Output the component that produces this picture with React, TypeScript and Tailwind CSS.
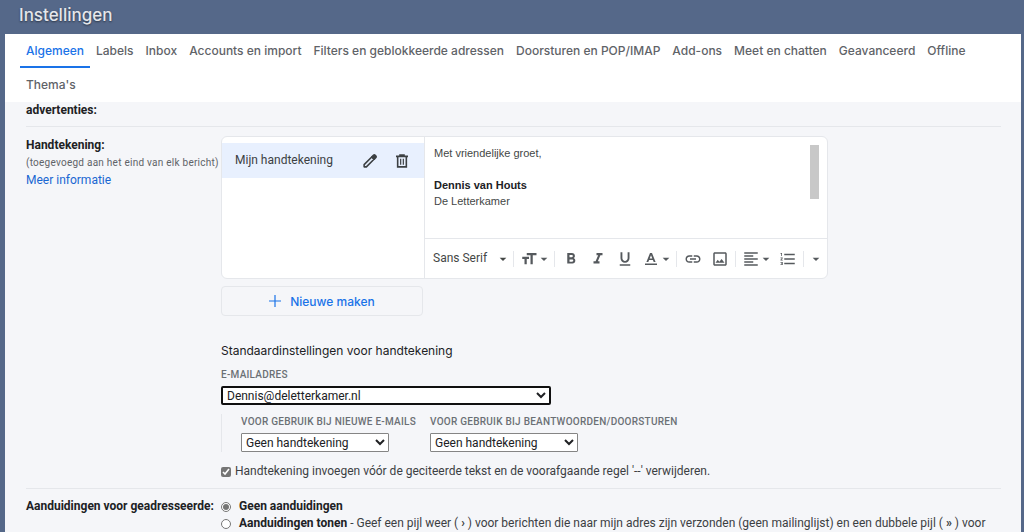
import React from 'react';
import clsx from 'clsx';
import {
  MdArrowDropDown,
  MdFormatAlignLeft,
  MdFormatBold,
  MdFormatItalic,
  MdFormatListNumbered,
  MdFormatSize,
  MdFormatUnderlined,
  MdLink,
  MdOutlineImage,
} from 'react-icons/md';

const tabs = [
  'Algemeen',
  'Labels',
  'Inbox',
  'Accounts en import',
  'Filters en geblokkeerde adressen',
  'Doorsturen en POP/IMAP',
  'Add-ons',
  'Meet en chatten',
  'Geavanceerd',
  'Offline',
  "Thema's",
];

const PencilIcon = () => (
  <svg viewBox="0 0 24 24" className="h-4 w-4" fill="none" stroke="currentColor" strokeWidth="2.4" strokeLinejoin="round">
    <path d="M3.2 20.8v-3.4L14.6 6 18 9.4 6.6 20.8z" />
    <path d="M14.8 5.6l2.6-2.4c.6-.6 1.4-.6 2 0l1.4 1.4c.6.6.6 1.4 0 2l-2.4 2.6z" fill="currentColor" />
  </svg>
);

const TrashIcon = () => (
  <svg viewBox="0 0 24 24" className="h-4 w-4" fill="none" stroke="currentColor" strokeWidth="2.4">
    <path d="M3 5h18M9 4V3h6v1M5.5 5v15.8h13V5" />
    <path d="M10 8.5v9M14 8.5v9" strokeWidth="1.8" />
  </svg>
);

const TextColorIcon = () => (
  <svg viewBox="0 0 18 18" className="h-[18px] w-[18px]" fill="currentColor">
    <path fillRule="evenodd" d="M8 3h2l3.6 9h-1.9l-.8-2H7.1l-.8 2H4.4zM9 5.2 7.7 8.5h2.6z" />
    <path d="M3 13.5h12V15H3z" />
  </svg>
);

interface ToolButtonProps {
  label: string;
  menu?: boolean;
  children?: React.ReactNode;
}

const ToolButton: React.FC<ToolButtonProps> = ({ label, menu, children }) => (
  <button type="button" aria-label={label} className={clsx('flex items-center', menu ? 'pl-1' : 'w-[27px] justify-center')}>
    {children}
    {menu && <MdArrowDropDown className="-ml-[2px] h-4 w-4" />}
  </button>
);

const Divider = () => <span className="mx-[2px] h-4 w-px bg-gray-200" />;

interface SelectFieldProps {
  id: string;
  label: string;
  value: string;
  className: string;
}

const SelectField: React.FC<SelectFieldProps> = ({ id, label, value, className }) => (
  <div className="flex flex-col items-start">
    <label htmlFor={id} className="mb-[3px] text-[10px] leading-4 font-medium tracking-wide text-[#6b7075] uppercase">
      {label}
    </label>
    <select id={id} className={clsx('h-[19px] bg-white text-[12px] text-[#202124]', className)}>
      <option>{value}</option>
    </select>
  </div>
);

const Toolbar = () => (
  <div className="flex h-10 items-center border-t border-gray-200 pl-1 text-[#55595d]">
    <button type="button" className="flex items-center gap-2 pl-1 text-[12px] text-[#444746]">
      Sans Serif
      <MdArrowDropDown className="h-4 w-4" />
    </button>
    <Divider />
    <ToolButton label="Grootte" menu>
      <MdFormatSize className="h-[18px] w-[18px]" />
    </ToolButton>
    <Divider />
    <ToolButton label="Vet">
      <MdFormatBold className="h-[18px] w-[18px]" />
    </ToolButton>
    <ToolButton label="Cursief">
      <MdFormatItalic className="h-[18px] w-[18px]" />
    </ToolButton>
    <ToolButton label="Onderstrepen">
      <MdFormatUnderlined className="h-[18px] w-[18px]" />
    </ToolButton>
    <ToolButton label="Tekstkleur" menu>
      <TextColorIcon />
    </ToolButton>
    <Divider />
    <ToolButton label="Link">
      <MdLink className="h-[18px] w-[18px]" />
    </ToolButton>
    <ToolButton label="Afbeelding invoegen">
      <MdOutlineImage className="h-[18px] w-[18px]" />
    </ToolButton>
    <Divider />
    <ToolButton label="Uitlijnen" menu>
      <MdFormatAlignLeft className="h-[18px] w-[18px]" />
    </ToolButton>
    <ToolButton label="Genummerde lijst">
      <MdFormatListNumbered className="h-[18px] w-[18px]" />
    </ToolButton>
    <Divider />
    <ToolButton label="Meer opties" menu />
  </div>
);

const SignatureEditor = () => (
  <div className="flex h-[143px] w-[607px] overflow-hidden rounded-md border border-gray-200 bg-white">
    <div className="w-[203px] border-r border-gray-200 pt-[6px]">
      <div className="flex h-[35px] items-center bg-[#e8f0fe] pl-[13px] text-[#3c4043]">
        <span className="flex-1">Mijn handtekening</span>
        <button type="button" aria-label="Naam bewerken" className="mr-4">
          <PencilIcon />
        </button>
        <button type="button" aria-label="Verwijderen" className="mr-[14px]">
          <TrashIcon />
        </button>
      </div>
    </div>
    <div className="flex flex-1 flex-col">
      <div className="flex flex-1 justify-between pt-2 pr-2 pl-[9px]">
        <div className="font-['Liberation_Sans',sans-serif] text-[11px] leading-4 text-[#444746]">
          <p>Met vriendelijke groet,</p>
          <p className="mt-4 font-bold text-[#202124]">Dennis van Houts</p>
          <p>De Letterkamer</p>
        </div>
        <div className="h-[54px] w-[9px] bg-[#c8c8c8]" />
      </div>
      <Toolbar />
    </div>
  </div>
);

export default function App() {
  return (
    <div className="flex h-screen flex-col overflow-hidden bg-[#556889] pr-[3px] pl-[5px] font-[Roboto,sans-serif] text-[12px] leading-[17px] text-[#3c4043]">
      <h1 className="h-[34px] shrink-0 pl-[14px] font-[Inter,sans-serif] text-[17px] leading-[30px] font-medium text-gray-200 [text-shadow:0_1px_2px_rgba(0,0,0,0.5)]">
        Instellingen
      </h1>
      <main className="flex-1 overflow-hidden bg-[#f5f6f9]">
        <nav className="flex flex-wrap bg-white px-[15px] font-[Inter,sans-serif] text-[12px] font-medium text-[#5f6368]">
          {tabs.map((tab, i) => (
            <a
              key={tab}
              href="#"
              className={clsx('h-[34px] border-b-2 px-[6px] leading-[34px]', i === 0 ? 'border-[#1a73e8] text-[#1a73e8]' : 'border-transparent')}
            >
              {tab}
            </a>
          ))}
        </nav>

        <div className="mr-5 ml-[21px]">
          <section className="border-b border-gray-200 pb-[7px] font-bold text-[#202124]">advertenties:</section>

          <section className="flex border-b border-gray-200 pt-[9px] pb-2">
            <div className="w-[195px] shrink-0 leading-[18px] whitespace-nowrap">
              <h2 className="font-bold text-[#202124]">Handtekening:</h2>
              <p className="text-[10px] leading-[17px] tracking-wide text-[#5f6368]">(toegevoegd aan het eind van elk bericht)</p>
              <a href="#" className="text-[#1967d2]">Meer informatie</a>
            </div>

            <div className="flex flex-col items-start">
              <SignatureEditor />
              <button
                type="button"
                className="mt-[7px] flex h-[30px] w-[202px] items-center justify-center gap-[9px] rounded-sm border border-gray-200 font-[Inter,sans-serif] text-[12px] font-medium text-[#1a73e8]"
              >
                <svg viewBox="0 0 12 12" className="h-3 w-3" stroke="currentColor" strokeWidth="1.2">
                  <path d="M6 0v12M0 6h12" />
                </svg>
                Nieuwe maken
              </button>

              <h3 className="mt-[26px] mb-2 font-[Inter,sans-serif] text-[12px] text-[#202124]">
                Standaardinstellingen voor handtekening
              </h3>
              <SelectField
                id="email"
                label="E-mailadres"
                value="Dennis@deletterkamer.nl"
                className="w-[330px] rounded-xs border-2 border-[#101010]"
              />
              <div className="mt-[9px] flex gap-[14px] border-l border-gray-200 pl-[19px]">
                <SelectField
                  id="new-mail"
                  label="Voor gebruik bij nieuwe e-mails"
                  value="Geen handtekening"
                  className="w-[148px] rounded-[1px] border border-[#858585]"
                />
                <SelectField
                  id="reply"
                  label="Voor gebruik bij beantwoorden/doorsturen"
                  value="Geen handtekening"
                  className="w-[148px] rounded-[1px] border border-[#858585]"
                />
              </div>
              <label className="mt-[11px] flex items-center gap-1">
                <input type="checkbox" defaultChecked className="h-[10px] w-[10px] accent-[#757575]" />
                Handtekening invoegen vóór de geciteerde tekst en de voorafgaande regel '--' verwijderen.
              </label>
            </div>
          </section>

          <section className="flex pt-[9px]">
            <h2 className="w-[195px] shrink-0 font-bold whitespace-nowrap text-[#202124]">Aanduidingen voor geadresseerde:</h2>
            <div>
              <label className="flex items-center gap-2">
                <input type="radio" name="indicators" defaultChecked className="h-[10px] w-[10px] accent-[#757575]" />
                <b className="text-[#202124]">Geen aanduidingen</b>
              </label>
              <label className="flex items-center gap-2">
                <input type="radio" name="indicators" className="h-[10px] w-[10px]" />
                <span className="whitespace-nowrap">
                  <b className="text-[#202124]">Aanduidingen tonen</b> - Geef een pijl weer ( <b>›</b> ) voor berichten die naar mijn adres zijn
                  verzonden (geen mailinglijst) en een dubbele pijl ( <b>»</b> ) voor
                </span>
              </label>
            </div>
          </section>
        </div>
      </main>
    </div>
  );
}
